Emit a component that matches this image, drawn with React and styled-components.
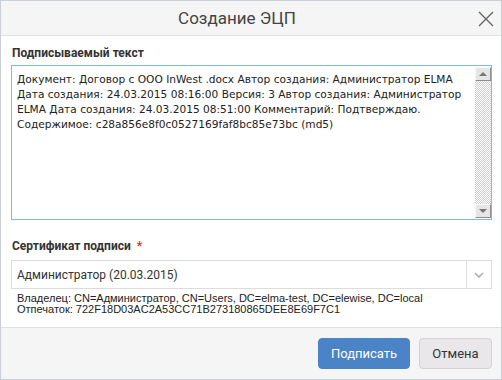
import React from 'react';
import styled, { createGlobalStyle } from 'styled-components';

const GlobalStyle = createGlobalStyle`
    html, body {
        margin: 0;
        padding: 0;
        background: #fff;
    }
    body {
        font-family: "Liberation Sans", Arial, sans-serif;
        color: #333;
    }
`;

const Dialog = styled.div`
    width: 502px;
    height: 380px;
    box-sizing: border-box;
    border: 1px solid #c9ced9;
    display: flex;
    flex-direction: column;
    background: #fff;
`;

const Header = styled.div`
    height: 34px;
    flex: none;
    background: #f5f5f5;
    border-bottom: 1px solid #e0e0e0;
    display: flex;
    align-items: center;
    justify-content: center;
    padding-right: 28px;
    position: relative;
`;

const Title = styled.div`
    font-family: Roboto, "Liberation Sans", sans-serif;
    font-size: 17px;
    color: #444;
`;

const CloseButton = styled.div`
    position: absolute;
    right: 7px;
    top: 10px;
    width: 16px;
    height: 16px;
    display: flex;
`;

const Body = styled.div`
    flex: 1;
    padding: 9px 9px 0 10px;
    display: flex;
    flex-direction: column;
`;

const Label = styled.div`
    font-family: Roboto, "Liberation Sans", sans-serif;
    font-size: 12px;
    font-weight: bold;
    color: #333;
    line-height: 16px;
    margin-left: 1px;
    margin-bottom: ${p => p.gap || 5}px;
    margin-top: ${p => p.top || 0}px;
`;

const Required = styled.span`
    color: #e03030;
    margin-left: 6px;
`;

const TextBox = styled.div`
    height: 155px;
    box-sizing: border-box;
    border: 1px solid #7ab9ee;
    display: flex;
`;

const TextContent = styled.div`
    flex: 1;
    padding: 6px 5px;
    font-family: "DejaVu Sans", Tahoma, sans-serif;
    font-size: 10.6px;
    line-height: 15px;
    color: #222;
    white-space: nowrap;
    overflow: hidden;
`;

const Scrollbar = styled.div`
    width: 16px;
    margin: 1px 0;
    display: flex;
    flex-direction: column;
`;

const ScrollButton = styled.div`
    height: 14px;
    box-sizing: border-box;
    background: #e6e6e6;
    border-top: 1px solid #f8f8f8;
    border-left: 1px solid #f8f8f8;
    border-right: 1px solid #8e8e8e;
    border-bottom: 1px solid #8e8e8e;
    display: flex;
    align-items: center;
    justify-content: center;
`;

const Arrow = styled.div`
    width: 0;
    height: 0;
    border-left: 4px solid transparent;
    border-right: 4px solid transparent;
    ${p => p.down
        ? 'border-top: 4px solid #777;'
        : 'border-bottom: 4px solid #777;'}
`;

const Track = styled.div`
    flex: 1;
    background: repeating-conic-gradient(#cfcfcf 0 25%, #fff 0 50%) 0 0 / 2px 2px;
`;

const Select = styled.div`
    height: 29px;
    box-sizing: border-box;
    border: 1px solid #dcdcdc;
    display: flex;
    align-items: stretch;
`;

const SelectValue = styled.div`
    flex: 1;
    display: flex;
    align-items: center;
    padding-left: 5px;
    font-family: Roboto, "Liberation Sans", sans-serif;
    font-size: 12px;
    color: #333;
`;

const SelectToggle = styled.div`
    width: 24px;
    border-left: 1px solid #dcdcdc;
    display: flex;
    align-items: center;
    justify-content: center;
`;

const Info = styled.div`
    margin-top: 4px;
    padding-left: 6px;
    font-family: "Liberation Sans", Arial, sans-serif;
    font-size: 11px;
    line-height: 11px;
    color: #222;
`;

const Footer = styled.div`
    height: 52px;
    flex: none;
    box-sizing: border-box;
    background: #f5f5f5;
    border-top: 1px solid #e0e0e0;
    display: flex;
    justify-content: flex-end;
    align-items: flex-start;
    padding: 10px 9px 0 0;
    gap: 9px;
`;

const Button = styled.div`
    height: 31px;
    box-sizing: border-box;
    border-radius: 4px;
    display: flex;
    align-items: center;
    justify-content: center;
    font-family: Roboto, "Liberation Sans", sans-serif;
    font-size: 13px;
    width: ${p => p.w}px;
    background: ${p => p.primary ? '#4a84c6' : '#e9e7e9'};
    color: ${p => p.primary ? '#fff' : '#333'};
    border: 1px solid ${p => p.primary ? '#4a84c6' : '#d4d2d4'};
`;

const lines = [
    'Документ: Договор с ООО InWest .docx Автор создания: Администратор ELMA',
    'Дата создания: 24.03.2015 08:16:00 Версия: 3 Автор создания: Администратор',
    'ELMA Дата создания: 24.03.2015 08:51:00 Комментарий: Подтверждаю.',
    'Содержимое: c28a856e8f0c0527169faf8bc85e73bc (md5)',
];

export default function App() {
    return (
        <>
            <GlobalStyle />
            <Dialog>
                <Header>
                    <Title>Создание ЭЦП</Title>
                    <CloseButton>
                        <svg width="16" height="16" viewBox="0 0 16 16">
                            <path d="M1 1 L15 15 M15 1 L1 15" stroke="#666" strokeWidth="1.4" fill="none" />
                        </svg>
                    </CloseButton>
                </Header>
                <Body>
                    <Label gap={4}>Подписываемый текст</Label>
                    <TextBox>
                        <TextContent>
                            {lines.map(l => <div key={l}>{l}</div>)}
                        </TextContent>
                        <Scrollbar>
                            <ScrollButton><Arrow /></ScrollButton>
                            <Track />
                            <ScrollButton><Arrow down /></ScrollButton>
                        </Scrollbar>
                    </TextBox>
                    <Label top={18} gap={6}>Сертификат подписи<Required>*</Required></Label>
                    <Select>
                        <SelectValue>Администратор (20.03.2015)</SelectValue>
                        <SelectToggle>
                            <svg width="10" height="6" viewBox="0 0 10 6">
                                <path d="M1 1 L5 5 L9 1" stroke="#aaa" strokeWidth="1.5" fill="none" />
                            </svg>
                        </SelectToggle>
                    </Select>
                    <Info>
                        <div>Владелец: CN=Администратор, CN=Users, DC=elma-test, DC=elewise, DC=local</div>
                        <div>Отпечаток: 722F18D03AC2A53CC71B273180865DEE8E69F7C1</div>
                    </Info>
                </Body>
                <Footer>
                    <Button primary w={92}>Подписать</Button>
                    <Button w={73}>Отмена</Button>
                </Footer>
            </Dialog>
        </>
    );
}
